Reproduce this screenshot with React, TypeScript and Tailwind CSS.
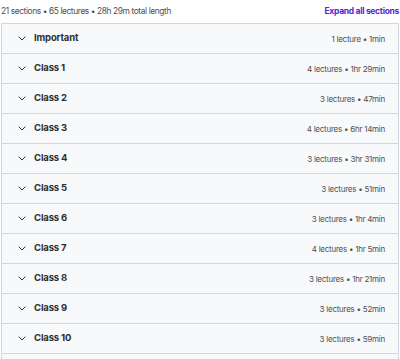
import React from "react";

const rows: [string, string][] = [
  ["Important", "1 lecture • 1min"],
  ["Class 1", "4 lectures • 1hr 29min"],
  ["Class 2", "3 lectures • 47min"],
  ["Class 3", "4 lectures • 6hr 14min"],
  ["Class 4", "3 lectures • 3hr 31min"],
  ["Class 5", "3 lectures • 51min"],
  ["Class 6", "3 lectures • 1hr 4min"],
  ["Class 7", "4 lectures • 1hr 5min"],
  ["Class 8", "3 lectures • 1hr 21min"],
  ["Class 9", "3 lectures • 52min"],
  ["Class 10", "3 lectures • 59min"],
];

function Chevron() {
  return (
    <svg width="8" height="5" viewBox="0 0 8 5" fill="none" className="shrink-0">
      <path d="M1 1l3 3 3-3" stroke="#2d2f31" strokeWidth="1" strokeLinecap="round" strokeLinejoin="round" />
    </svg>
  );
}

export default function App() {
  return (
    <div className="w-[400px] h-[359px] overflow-hidden bg-white text-[#2d2f31]" style={{ fontFamily: "Inter, 'Noto Sans', sans-serif" }}>
      <div className="h-[23px] flex items-center justify-between pr-[1px]">
        <span className="text-[8.4px] tracking-[-0.4px] text-[#4d5054] pl-[1px]">21 sections • 65 lectures • 28h 29m total length</span>
        <span className="text-[8.5px] font-bold text-[#5624d0] tracking-[-0.3px]">Expand all sections</span>
      </div>
      <div className="ml-[1px] w-[398px] border-t border-x border-[#d1d7dc]">
        {rows.map(([t, m]) => (
          <div key={t} className="h-[30px] flex items-center bg-[#f7f9fa] border-b border-[#d1d7dc] pl-[16px] pr-[13px]">
            <Chevron />
            <span className="ml-[8px] text-[9.5px] font-bold tracking-[-0.15px]">{t}</span>
            <span className="ml-auto text-[8px] tracking-[-0.25px] text-[#4d5054]">{m}</span>
          </div>
        ))}
        <div className="h-[30px] bg-[#f7f9fa]" />
      </div>
    </div>
  );
}
